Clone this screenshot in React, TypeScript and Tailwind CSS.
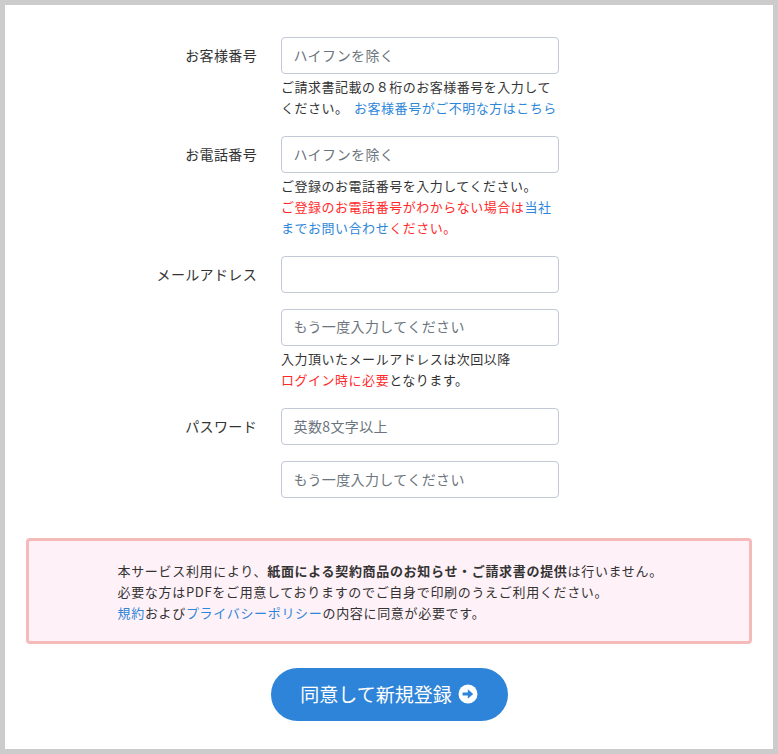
const FONT = "font-['Noto_Sans_CJK_JP','Noto_Sans',sans-serif]";
const LINK = "text-[#2e86d9]";
const RED = "text-[#ff2b2b]";

const Field = ({ placeholder, className = "" }: { placeholder?: string; className?: string }) => (
  <input
    type="text"
    placeholder={placeholder}
    className={`block h-[37px] w-[278px] rounded-[4px] border border-[#c3c9d6] bg-white pb-[2px] pl-[11.5px] pr-3 text-[14px] tracking-[0.38px] text-[#333] outline-none placeholder:text-[#6c757d] ${className}`}
  />
);

const Help = ({ children }: { children: React.ReactNode }) => (
  <p className="mt-[3px] w-[278px] text-[13px] leading-[20.8px] tracking-[0.52px] text-[#333]">{children}</p>
);

const Row = ({ label, children, className = "" }: { label?: string; children: React.ReactNode; className?: string }) => (
  <div className={`flex ${className}`}>
    <label className="w-[257px] pt-[7.6px] text-right text-[14px] leading-[20px] tracking-[0.35px] text-[#333]">{label}</label>
    <div className="ml-[24px]">{children}</div>
  </div>
);

export default function App() {
  return (
    <div className={`h-[754px] w-[778px] overflow-hidden border-[5px] border-[#cccccc] bg-white ${FONT}`}>
      <form className="pt-[32px]" onSubmit={(e) => e.preventDefault()}>
        <div className="-ml-[5px] flex flex-col gap-[17.5px]">
          <Row label="お客様番号">
            <Field placeholder="ハイフンを除く" />
            <Help>
              ご請求書記載の８桁のお客様番号を入力してください。 <a className={`ml-[2px] ${LINK}`}>お客様番号がご不明な方はこちら</a>
            </Help>
          </Row>
          <Row label="お電話番号">
            <Field placeholder="ハイフンを除く" />
            <Help>
              ご登録のお電話番号を入力してください。
              <br />
              <span className={RED}>ご登録のお電話番号がわからない場合は</span>
              <a className={LINK}>当社までお問い合わせ</a>
              <span className={RED}>ください。</span>
            </Help>
          </Row>
          <Row label="メールアドレス">
            <Field />
            <Field placeholder="もう一度入力してください" className="mt-[16px]" />
            <Help>
              入力頂いたメールアドレスは次回以降
              <br />
              <span className={RED}>ログイン時に必要</span>となります。
            </Help>
          </Row>
          <Row label="パスワード">
            <Field placeholder="英数8文字以上" />
            <Field placeholder="もう一度入力してください" className="mt-[16px]" />
          </Row>
        </div>

        <div className="mx-[21px] mt-[40px] h-[106px] rounded-[4px] border-[3px] border-[#f5baba] bg-[#fff1f8] pl-[88.5px] pt-[19px] text-[13px] leading-[21px] tracking-[0.68px] text-[#333]">
          <p>
            本サービス利用により、<strong className="font-bold">紙面による契約商品のお知らせ・ご請求書の提供</strong>は行いません。
          </p>
          <p>必要な方はPDFをご用意しておりますのでご自身で印刷のうえご利用ください。</p>
          <p>
            <a className={LINK}>規約</a>および<a className={LINK}>プライバシーポリシー</a>の内容に同意が必要です。
          </p>
        </div>

        <div className="mt-[24px] flex justify-center">
          <button className="flex h-[53px] w-[237px] items-center justify-center gap-[6px] rounded-full bg-[#2e84d8] pb-[1px] text-[19px] text-white">
            同意して新規登録
            <svg viewBox="0 0 20 20" className="h-[20px] w-[20px]">
              <circle cx="10" cy="10" r="9.5" fill="#fff" />
              <path d="M4.6 8.4h5.2V5.2L15.2 10l-5.4 4.8v-3.2H4.6z" fill="#2e84d8" />
            </svg>
          </button>
        </div>
      </form>
    </div>
  );
}
